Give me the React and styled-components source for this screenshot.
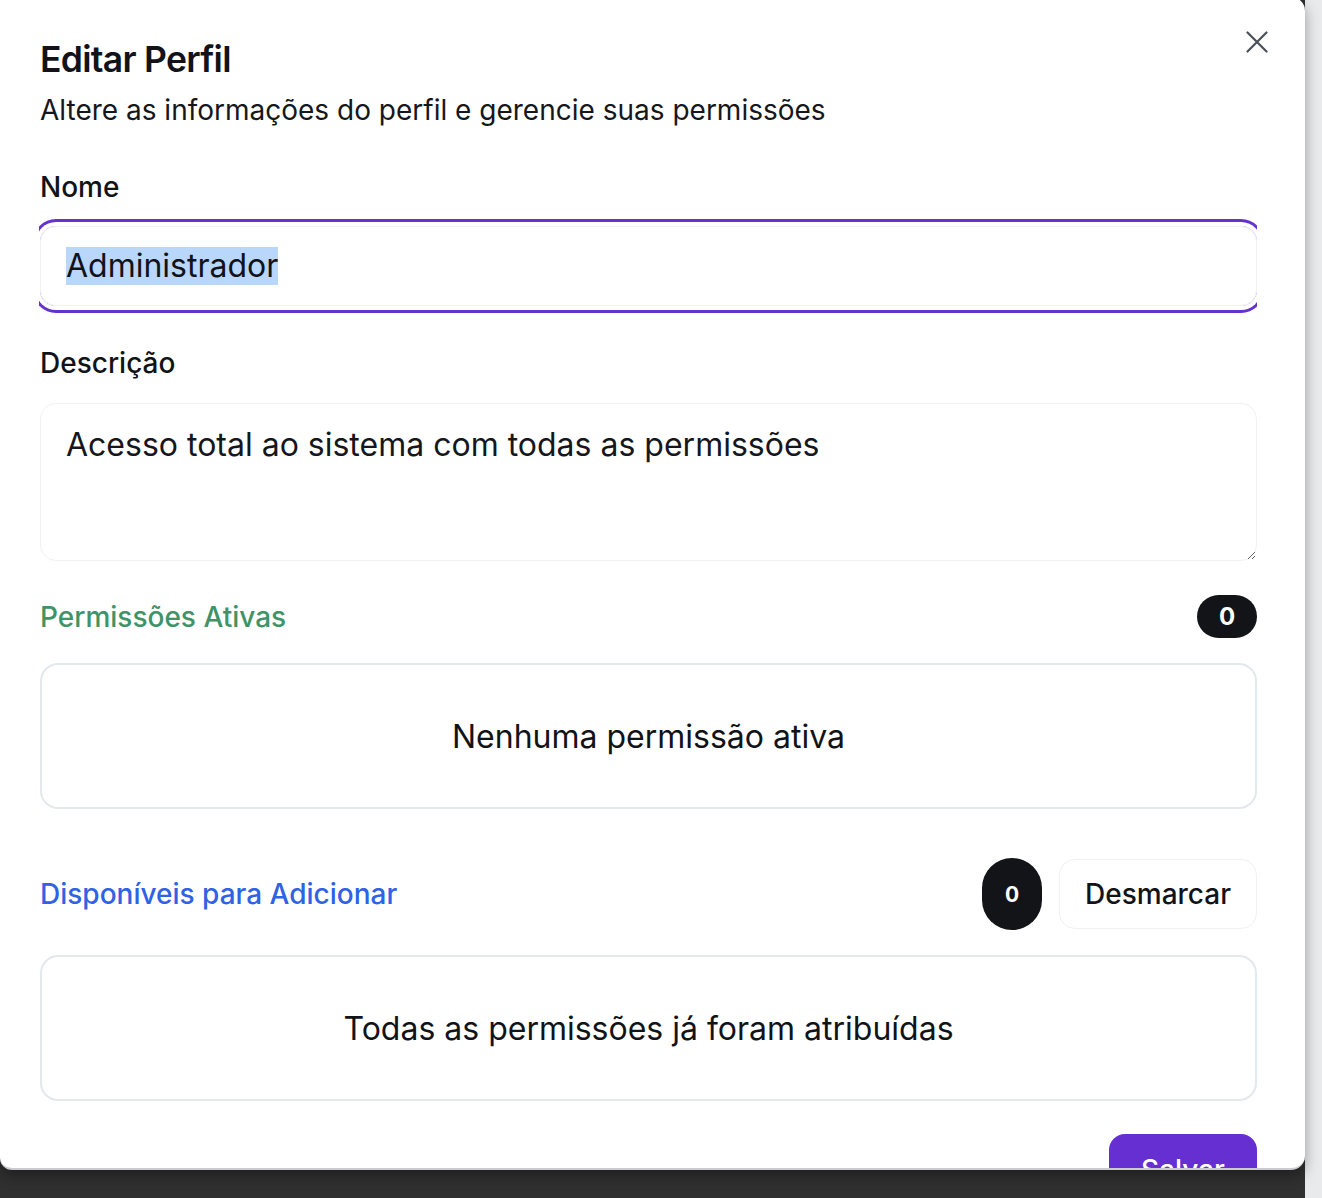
import React from "react";
import styled, { createGlobalStyle } from "styled-components";

const GlobalStyle = createGlobalStyle`
  html, body {
    margin: 0;
    padding: 0;
    height: 100%;
    overflow: hidden;
  }
  body {
    font-family: Inter, "Noto Sans", "Liberation Sans", sans-serif;
    color: #111318;
  }
`;

export default function App() {
  return (
    <Page>
      <GlobalStyle />
      <Backdrop>
        <Panel>
          <CloseButton aria-label="Fechar">
            <svg width="22" height="22" viewBox="0 0 22 22" fill="none">
              <path
                d="M1.5 1.5L20.5 20.5M20.5 1.5L1.5 20.5"
                stroke="#4b5058"
                strokeWidth="2.2"
                strokeLinecap="round"
              />
            </svg>
          </CloseButton>
          <Content>
            <Title>Editar Perfil</Title>
            <Subtitle>Altere as informações do perfil e gerencie suas permissões</Subtitle>

            <Label $mt={41}>Nome</Label>
            <Field>
              <Selected>Administrador</Selected>
            </Field>

            <Label $mt={39}>Descrição</Label>
            <TextArea
              readOnly
              defaultValue="Acesso total ao sistema com todas as permissões"
            />

            <SectionRow $mt={34}>
              <SectionTitle $color="#3e9467">Permissões Ativas</SectionTitle>
              <Badge>0</Badge>
            </SectionRow>
            <EmptyBox>Nenhuma permissão ativa</EmptyBox>

            <SectionRow $mt={49}>
              <SectionTitle $color="#2f62e4">Disponíveis para Adicionar</SectionTitle>
              <Actions>
                <Badge $tall>0</Badge>
                <GhostButton>Desmarcar</GhostButton>
              </Actions>
            </SectionRow>
            <EmptyBox>Todas as permissões já foram atribuídas</EmptyBox>

            <Footer>
              <PrimaryButton>Salvar</PrimaryButton>
            </Footer>
          </Content>
        </Panel>
      </Backdrop>
      <SideStrip />
    </Page>
  );
}

const Page = styled.div`
  display: flex;
  width: 100vw;
  height: 100vh;
  overflow: hidden;
`;

const Backdrop = styled.div`
  width: 1305px;
  flex-shrink: 0;
  background: #303030;
`;

const SideStrip = styled.div`
  flex: 1;
  background: #e9eaec;
`;

const Panel = styled.div`
  position: relative;
  margin-top: -3px;
  height: 1173px;
  background: #ffffff;
  border-radius: 0 14px 14px 12px;
  border-bottom: 2px solid #c9cbce;
  box-shadow: 0 6px 14px rgba(0, 0, 0, 0.35);
  overflow: hidden;
  box-sizing: border-box;
`;

const CloseButton = styled.button`
  position: absolute;
  top: 34px;
  right: 37px;
  padding: 0;
  border: none;
  background: transparent;
  display: flex;
  cursor: pointer;
`;

const Content = styled.div`
  display: flex;
  flex-direction: column;
  margin: 0 48px 0 39px;
  padding-top: 42px;
  overflow: hidden;
`;

const Title = styled.h2`
  margin: 0 0 0 1px;
  font-size: 35.5px;
  line-height: 42px;
  font-weight: 600;
  letter-spacing: -0.02em;
`;

const Subtitle = styled.p`
  margin: 11px 0 0 1px;
  font-size: 28px;
  line-height: 36px;
  font-weight: 400;
  color: #15171c;
`;

const Label = styled.div`
  margin: ${(p) => p.$mt}px 0 0 1px;
  font-size: 28px;
  line-height: 36px;
  font-weight: 500;
`;

const Field = styled.div`
  margin: 21px 0 0 1px;
  height: 80px;
  box-sizing: border-box;
  display: flex;
  align-items: center;
  padding: 0 25px;
  border: 1px solid #f1f1f3;
  border-radius: 16px;
  box-shadow: 0 0 0 4px #ffffff, 0 0 0 7px #6532d0;
  font-size: 32px;
`;

const Selected = styled.span`
  background: #b9d6fb;
  line-height: 38px;
`;

const TextArea = styled.textarea`
  margin: 22px 0 0 1px;
  height: 158px;
  box-sizing: border-box;
  width: calc(100% - 1px);
  padding: 17px 25px;
  border: 1px solid #f1f1f3;
  border-radius: 16px;
  font-family: inherit;
  font-size: 32px;
  line-height: 48px;
  color: #15171c;
  resize: vertical;
  outline: none;
`;

const SectionRow = styled.div`
  margin: ${(p) => p.$mt}px 0 0 1px;
  display: flex;
  align-items: center;
  justify-content: space-between;
`;

const SectionTitle = styled.div`
  font-size: 28px;
  line-height: 36px;
  font-weight: 500;
  color: ${(p) => p.$color};
`;

const Actions = styled.div`
  display: flex;
  align-items: center;
  gap: 17px;
`;

const Badge = styled.span`
  display: inline-flex;
  align-items: center;
  justify-content: center;
  width: 60px;
  height: ${(p) => (p.$tall ? 72 : 43)}px;
  border-radius: 999px;
  background: #121418;
  color: #ffffff;
  font-size: ${(p) => (p.$tall ? 21 : 24)}px;
  font-weight: 700;
`;

const GhostButton = styled.button`
  height: 70px;
  padding: 0 25px;
  border: 1px solid #f1f1f3;
  border-radius: 16px;
  background: #ffffff;
  font-family: inherit;
  font-size: 28px;
  font-weight: 500;
  color: #111318;
  cursor: pointer;
`;

const EmptyBox = styled.div`
  margin: 25px 0 0 1px;
  height: 146px;
  box-sizing: border-box;
  display: flex;
  align-items: center;
  justify-content: center;
  border: 2px solid #e3e8ed;
  border-radius: 18px;
  font-size: 32px;
  color: #111318;
`;

const Footer = styled.div`
  margin-top: 33px;
  display: flex;
  justify-content: flex-end;
`;

const PrimaryButton = styled.button`
  width: 148px;
  height: 72px;
  border: none;
  border-radius: 16px;
  background: #652fd1;
  color: #ffffff;
  font-family: inherit;
  font-size: 28px;
  font-weight: 500;
  cursor: pointer;
`;
